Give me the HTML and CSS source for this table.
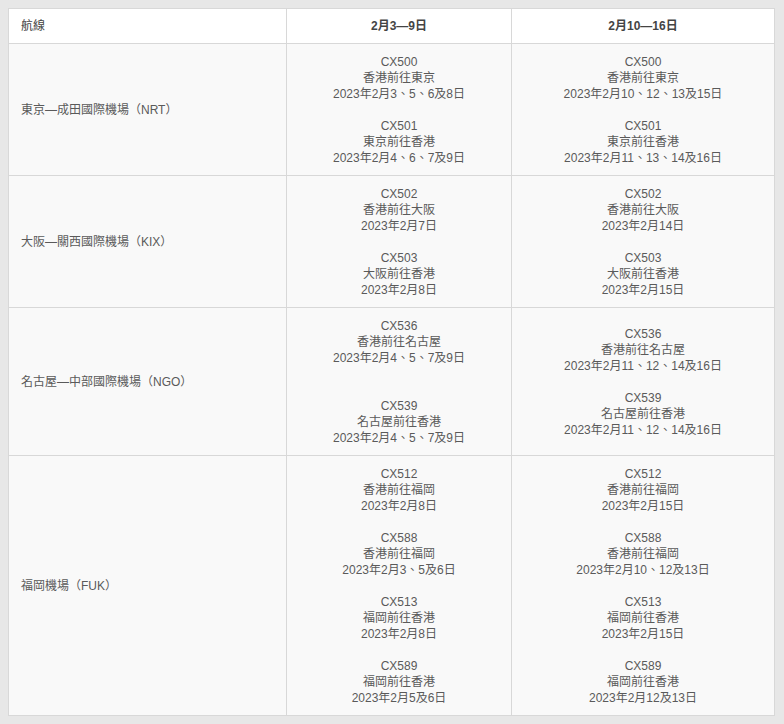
FILE: index.html
```html
<!DOCTYPE html>
<html lang="zh-Hant">
<head>
<meta charset="utf-8">
<title>航線</title>
<link rel="stylesheet" href="styles.css">
</head>
<body>
<table class="schedule">
  <thead>
    <tr>
      <th class="route-head">航線</th>
      <th class="week">2月3—9日</th>
      <th class="week">2月10—16日</th>
    </tr>
  </thead>
  <tbody>
    <tr>
      <td class="route">東京—成田國際機場（NRT）</td>
      <td class="flights">CX500<br>香港前往東京<br>2023年2月3、5、6及8日<br><br>CX501<br>東京前往香港<br>2023年2月4、6、7及9日</td>
      <td class="flights">CX500<br>香港前往東京<br>2023年2月10、12、13及15日<br><br>CX501<br>東京前往香港<br>2023年2月11、13、14及16日</td>
    </tr>
    <tr>
      <td class="route">大阪—關西國際機場（KIX）</td>
      <td class="flights">CX502<br>香港前往大阪<br>2023年2月7日<br><br>CX503<br>大阪前往香港<br>2023年2月8日</td>
      <td class="flights">CX502<br>香港前往大阪<br>2023年2月14日<br><br>CX503<br>大阪前往香港<br>2023年2月15日</td>
    </tr>
    <tr>
      <td class="route">名古屋—中部國際機場（NGO）</td>
      <td class="flights">CX536<br>香港前往名古屋<br>2023年2月4、5、7及9日<br><br><br>CX539<br>名古屋前往香港<br>2023年2月4、5、7及9日</td>
      <td class="flights">CX536<br>香港前往名古屋<br>2023年2月11、12、14及16日<br><br>CX539<br>名古屋前往香港<br>2023年2月11、12、14及16日</td>
    </tr>
    <tr>
      <td class="route">福岡機場（FUK）</td>
      <td class="flights">CX512<br>香港前往福岡<br>2023年2月8日<br><br>CX588<br>香港前往福岡<br>2023年2月3、5及6日<br><br>CX513<br>福岡前往香港<br>2023年2月8日<br><br>CX589<br>福岡前往香港<br>2023年2月5及6日</td>
      <td class="flights">CX512<br>香港前往福岡<br>2023年2月15日<br><br>CX588<br>香港前往福岡<br>2023年2月10、12及13日<br><br>CX513<br>福岡前往香港<br>2023年2月15日<br><br>CX589<br>福岡前往香港<br>2023年2月12及13日</td>
    </tr>
  </tbody>
</table>
</body>
</html>
```
FILE: styles.css
```css
html, body {
  background: #e7e7e7;
}
body {
  margin: 8px 9px 8px 8px;
  font-family: "Liberation Sans", "Noto Sans CJK TC", sans-serif;
  font-size: 12px;
  line-height: 16px;
  color: #5a5a5a;
}
.schedule {
  width: 100%;
  border-collapse: collapse;
  box-shadow: 0 0 2px rgba(0,0,0,0.12);
}
.schedule th,
.schedule td {
  border: 1px solid #d8d8d8;
  padding: 10px 12px 9px;
  vertical-align: middle;
}
.schedule thead th {
  background: #fff;
  padding: 9px 12px;
  color: #444;
}
.route-head {
  text-align: left;
  font-weight: normal;
  width: 253px;
}
.week {
  font-weight: bold;
  text-align: center;
}
.schedule th.week:nth-child(2) { width: 200px; }
.schedule tbody td {
  background: #f9f9f9;
}
.route {
  text-align: left;
}
.flights {
  text-align: center;
}
```
